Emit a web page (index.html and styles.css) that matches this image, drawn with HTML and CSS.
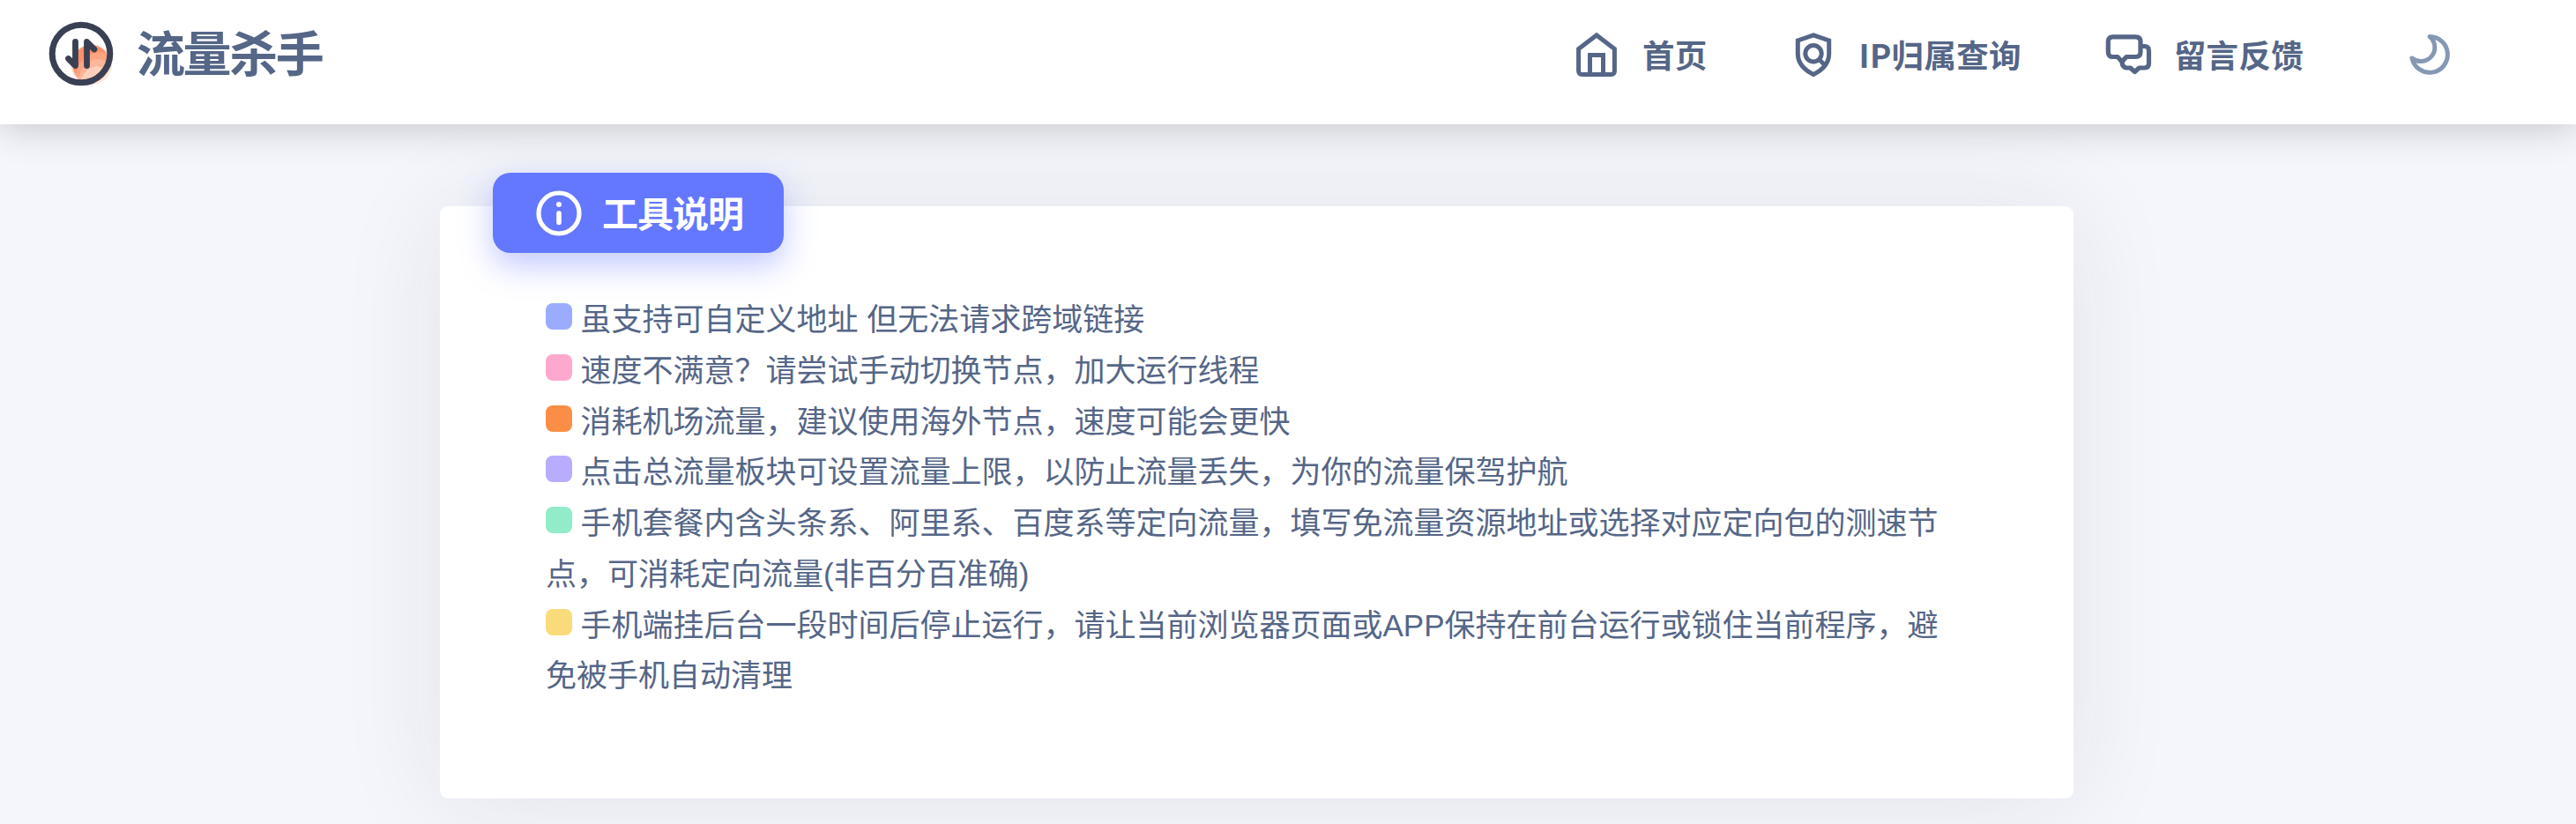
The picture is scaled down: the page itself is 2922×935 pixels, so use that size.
FILE: index.html
```html
<!DOCTYPE html>
<html lang="zh-CN">
<head>
<meta charset="utf-8">
<title>流量杀手</title>
<link rel="stylesheet" href="styles.css">
</head>
<body>
<header class="header">
  <a class="brand">
    <svg class="brand-logo" viewBox="0 0 78 78" fill="none">
      <circle cx="51" cy="51" r="23" fill="#ffe6dc"/>
      <circle cx="49" cy="51" r="21.500" fill="#ffd0bd"/>
      <path d="M31 45C37 30 58 27 67 38C71 46 68 52 64 56C58 50 44 54 38 70C31 63 28 55 31 45Z" fill="#ffb799"/>
      <path d="M31 44C37 27 57 25 67 37C69 42 69 46 68 49C58 40 41 46 36 67C30 60 28 52 31 44Z" fill="#ffa482"/>
      <path d="M31 43C37 26 58 25 68 39C58 34 37 40 33 62C29 56 29 49 31 43Z" fill="#ff9068"/>
      <circle cx="39" cy="39" r="32.800" stroke="#3a4054" stroke-width="7"/>
      <path d="M32.500 25.500V52.500L24.500 44.500M45.500 52.500V25.500L54 34" stroke="#3a4054" stroke-width="6.800" stroke-linecap="round" stroke-linejoin="round"/>
    </svg>
    <span class="brand-name">流量杀手</span>
  </a>
  <nav class="nav">
    <a class="nav-item home">
      <svg class="nav-icon" viewBox="0 0 56 56" fill="none" stroke="#556687" stroke-width="5">
        <path d="M7.600 21.500L28 6L48.400 21.500V46.500Q48.400 50.500 44.400 50.500H11.600Q7.600 50.500 7.600 46.500Z"/>
        <path d="M20.500 50.500V28.500H35.500V50.500"/>
      </svg>
      <span>首页</span>
    </a>
    <a class="nav-item lookup">
      <svg class="nav-icon" viewBox="0 0 56 56" fill="none" stroke="#556687" stroke-width="5">
        <path d="M28 5.800L45.700 12V27C45.700 38 38 45.500 28 50.500C18 45.500 10.300 38 10.300 27V12Z"/>
        <circle cx="28" cy="26.800" r="9.200"/>
        <path d="M34 33L41 40"/>
      </svg>
      <span>IP归属查询</span>
    </a>
    <a class="nav-item feedback">
      <svg class="nav-icon" viewBox="0 0 56 56" fill="none" stroke="#556687" stroke-width="5.200" stroke-linejoin="round">
        <path d="M10.500 7.800H36.500Q42 7.800 42 13.300V25Q42 30.500 36.500 30.500H26L21 36L16 30.500H10.500Q5.300 30.500 5.300 25V13.300Q5.300 7.800 10.500 7.800Z"/>
        <path d="M42 18.500H46.500Q51.500 18.500 51.500 23.500V38Q51.500 43 46.500 43H40.500L35.500 47.500L30.500 43H26Q21 42 21 36"/>
      </svg>
      <span>留言反馈</span>
    </a>
    <svg class="theme-icon" viewBox="0 0 56 56" fill="none" stroke="#8598b4" stroke-width="5" stroke-linejoin="round">
      <path d="M28 7.500A20.400 20.400 0 1 1 8 32A15.500 15.500 0 0 0 28 7.500Z"/>
    </svg>
  </nav>
</header>
<main class="card">
  <h2 class="badge">
    <svg class="badge-icon" viewBox="0 0 52 52" fill="none" stroke="#fff">
      <circle cx="26" cy="26" r="23" stroke-width="5.200"/>
      <path d="M26 26V36.500" stroke-width="5.600" stroke-linecap="round"/>
      <circle cx="26" cy="16" r="3" fill="#fff" stroke="none"/>
    </svg>
    <span class="badge-label">工具说明</span>
  </h2>
  <ul class="notes">
    <li><i class="dot blue"></i>虽支持可自定义地址 但无法请求跨域链接</li>
    <li><i class="dot pink"></i>速度不满意？请尝试手动切换节点，加大运行线程</li>
    <li><i class="dot orange"></i>消耗机场流量，建议使用海外节点，速度可能会更快</li>
    <li><i class="dot violet"></i>点击总流量板块可设置流量上限，以防止流量丢失，为你的流量保驾护航</li>
    <li><i class="dot green"></i>手机套餐内含头条系、阿里系、百度系等定向流量，填写免流量资源地址或选择对应定向包的测速节点，可消耗定向流量(非百分百准确)</li>
    <li><i class="dot yellow"></i>手机端挂后台一段时间后停止运行，请让当前浏览器页面或APP保持在前台运行或锁住当前程序，避免被手机自动清理</li>
  </ul>
</main>
</body>
</html>
```

FILE: styles.css
```css
* { box-sizing: border-box; }
body {
  margin: 0;
  height: 935px;
  overflow: hidden;
  background: #f4f6fb;
  color: #556687;
  font-family: "Noto Sans CJK SC", sans-serif;
}
.header {
  position: relative;
  z-index: 1;
  height: 141px;
  padding: 0 138px 17px 53px;
  display: flex;
  align-items: center;
  justify-content: space-between;
  background: #fff;
  box-shadow: 0 4px 40px rgba(0, 0, 0, .2);
}
.brand { display: flex; align-items: center; gap: 24px; padding-bottom: 3px; }
.brand-logo { width: 78px; height: 78px; }
.brand-name {
  padding-bottom: 8px;
  font-size: 55px;
  line-height: 78px;
  font-weight: 700;
  letter-spacing: -2.4px;
}
.nav {
  display: flex;
  align-items: center;
  font-size: 36.5px;
  line-height: 56px;
  font-weight: 700;
  letter-spacing: .3px;
}
.nav-item { display: flex; align-items: center; gap: 24px; }
.nav-item span { padding-bottom: 1px; }
.home { margin-right: 92px; }
.lookup { margin-right: 93px; }
.feedback { margin-right: 115px; }
.nav-icon, .theme-icon { width: 56px; height: 56px; flex: none; }
.card {
  width: 1853px;
  height: 672px;
  margin: 93px 0 0 499px;
  padding: 0 120px 0 60px;
  background: #fff;
  border-radius: 9px;
  box-shadow: 0 4px 120px rgba(40, 40, 70, .085);
}
.badge {
  position: relative;
  top: -38px;
  width: 330px;
  height: 91px;
  margin: 0;
  padding: 1px 0 0 49px;
  display: flex;
  align-items: center;
  gap: 23px;
  color: #fff;
  background: #6477ff;
  border-radius: 20px;
  box-shadow: 0 14px 36px rgba(100, 119, 255, .4);
  font-size: 41px;
  line-height: 60px;
  letter-spacing: -1px;
}
.badge-icon { width: 52px; height: 52px; }
.badge-label { padding-bottom: 4px; }
.notes {
  margin: 9px 0 0;
  padding: 0 0 0 60px;
  list-style: none;
  font-family: "Liberation Sans", "Noto Sans CJK SC", sans-serif;
  font-size: 35px;
  line-height: 57.75px;
}
.dot {
  display: inline-block;
  width: 30px;
  height: 30px;
  margin-right: 9.500px;
  border-radius: 8px;
  vertical-align: 1px;
}
.blue { background: #9bacff; }
.pink { background: #ffa8cf; }
.orange { background: #fa8e46; }
.violet { background: #b8acff; }
.green { background: #93ecc9; }
.yellow { background: #fadb7b; }
```
